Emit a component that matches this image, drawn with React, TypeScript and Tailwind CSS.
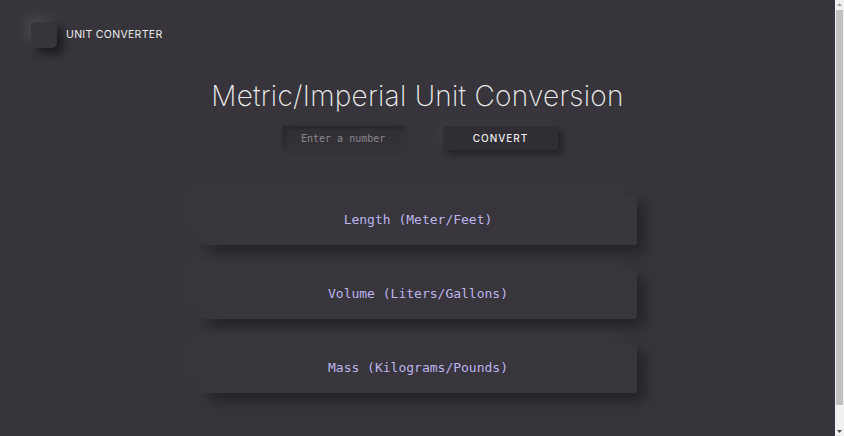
import React from "react";

const cards = ["Length (Meter/Feet)", "Volume (Liters/Gallons)", "Mass (Kilograms/Pounds)"];

function ScrollBar() {
  return (
    <div className="flex h-[436px] w-[9px] shrink-0 flex-col items-center bg-[#f1f1f1]">
      <div className="flex h-[9px] w-full items-center justify-center">
        <svg width="5" height="3" viewBox="0 0 5 3"><path d="M0 3 L2.5 0 L5 3 Z" fill="#a3a3a3" /></svg>
      </div>
      <div className="mt-[1px] h-[395px] w-[7px] bg-[#c1c1c1]" />
      <div className="flex-1" />
      <div className="flex h-[9px] w-full items-center justify-center">
        <svg width="5" height="3" viewBox="0 0 5 3"><path d="M0 0 L5 0 L2.5 3 Z" fill="#505050" /></svg>
      </div>
    </div>
  );
}

export default function App() {
  return (
    <div className="flex h-[436px] overflow-hidden bg-[#37353b]">
      <div className="flex-1 font-['Inter','Liberation_Sans',sans-serif]">
        <header className="flex items-center gap-[9px] pl-[31px] pt-[22px]">
          <div className="h-[26px] w-[26px] rounded-[5px] bg-[#37353b] shadow-[-6px_-6px_12px_rgba(255,255,255,0.09),6px_6px_10px_rgba(0,0,0,0.5)]" />
          <span className="text-[10.5px] font-normal tracking-[0.03em] text-[#ededed]">UNIT CONVERTER</span>
        </header>
        <h1 className="mt-[30px] text-center text-[28px] font-extralight leading-[36px] tracking-[0.01em] text-[#ececec]">
          Metric/Imperial Unit Conversion
        </h1>
        <div className="mt-[12px] flex items-center justify-center gap-[38px] pl-[6px]">
          <input
            placeholder="Enter a number"
            className="h-[24px] w-[122px] bg-[#333137] pl-[18px] font-['DejaVu_Sans_Mono',monospace] text-[10px] text-[#cfcfcf] outline-none placeholder:text-[#8a888d] shadow-[inset_2px_2px_5px_rgba(0,0,0,0.25),inset_-2px_-2px_5px_rgba(255,255,255,0.03),0_0_6px_rgba(0,0,0,0.15)]"
          />
          <button className="h-[24px] w-[115px] bg-[#302e34] text-[10px] font-medium tracking-[0.1em] text-[#ececec] shadow-[-3px_-3px_6px_rgba(255,255,255,0.04),4px_4px_7px_rgba(0,0,0,0.4)]">
            CONVERT
          </button>
        </div>
        <div className="mt-[45px] flex flex-col items-center gap-[24px] pl-[1px]">
          {cards.map((c) => (
            <div
              key={c}
              className="flex h-[50px] w-[437px] items-center justify-center rounded-[3px] bg-[#38363c] font-['DejaVu_Sans_Mono',monospace] text-[13px] text-[#bdb4ec] shadow-[-10px_-10px_18px_rgba(255,255,255,0.025),8px_8px_14px_rgba(0,0,0,0.35)]"
            >
              {c}
            </div>
          ))}
        </div>
      </div>
      <ScrollBar />
    </div>
  );
}
